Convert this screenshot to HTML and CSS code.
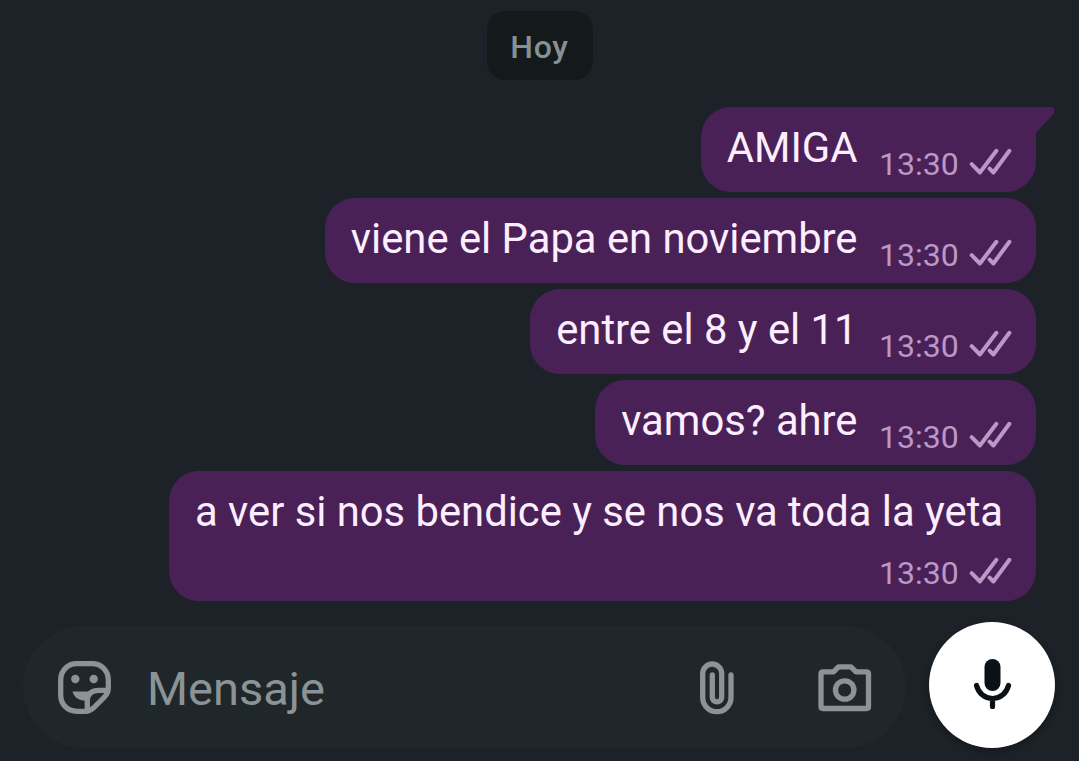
FILE: index.html
```html
<!DOCTYPE html>
<html lang="es">
<head>
    <meta charset="UTF-8">
    <meta name="viewport" content="width=device-width, initial-scale=1.0">
    <title>Chat</title>
    <link rel="stylesheet" href="styles.css">
</head>
<body>
    <svg class="symbols">
        <symbol id="checks" viewBox="0 0 44 28">
            <path d="M2.7 16.2l8.2 8.3L27.4 2.8M20.6 20.6l3.8 3.9L40.4 2.8"/>
        </symbol>
    </svg>

    <div class="chat">
        <div class="date">Hoy</div>

        <div class="messages">
            <div class="message first">
                <span class="text">AMIGA</span>
                <span class="meta"><span class="time">13:30</span><svg class="checks"><use href="#checks"/></svg></span>
                <svg class="tail" viewBox="0 0 24 30"><path d="M0 0H18.5C23.5 0 25 4 22 7.5L5 26V30H0z"/></svg>
            </div>
            <div class="message">
                <span class="text">viene el Papa en noviembre</span>
                <span class="meta"><span class="time">13:30</span><svg class="checks"><use href="#checks"/></svg></span>
            </div>
            <div class="message">
                <span class="text">entre el 8 y el 11</span>
                <span class="meta"><span class="time">13:30</span><svg class="checks"><use href="#checks"/></svg></span>
            </div>
            <div class="message">
                <span class="text">vamos? ahre</span>
                <span class="meta"><span class="time">13:30</span><svg class="checks"><use href="#checks"/></svg></span>
            </div>
            <div class="message long">
                <span class="text">a ver si nos bendice y se nos va toda la yeta</span>
                <span class="meta"><span class="time">13:30</span><svg class="checks"><use href="#checks"/></svg></span>
            </div>
        </div>

        <div class="footer">
            <div class="input-bar">
                <!-- sticker -->
                <svg class="icon sticker" viewBox="0 0 54 54">
                    <path d="M19 2.7H34C43.5 2.7 50.3 9.5 50.3 19V27C50.3 31 49.5 33 46.5 36L36 46.5C33 49.5 31 50.3 27 50.3H19C9.5 50.3 2.7 43.5 2.7 34V19C2.7 9.5 9.5 2.7 19 2.7z"/>
                    <path d="M49.5 29.3H41C33.5 29.3 29.3 33 29.3 40V50"/>
                    <path class="fill" d="M14.5 30.500H36L29.5 40C21 40 16 36.5 14.5 30.5z"/>
                    <circle class="fill" cx="17.3" cy="18" r="4.2"/>
                    <circle class="fill" cx="35.7" cy="18" r="4.2"/>
                </svg>
                <span class="placeholder">Mensaje</span>
                <!-- attach -->
                <svg class="icon clip" viewBox="0 0 36 54">
                    <path d="M31 14V36.5A14.15 14.15 0 0 1 2.7 36.5V12.5A9.5 9.5 0 0 1 21.7 12.5V36.2A4.7 4.7 0 0 1 12.3 36.2V14"/>
                </svg>
                <!-- camera -->
                <svg class="icon camera" viewBox="0 0 54 48">
                    <path d="M5 7.8H15.5L20.5 2.8H33L38 7.8H48.5Q50.5 7.8 50.5 9.8V42.5Q50.5 44.5 48.5 44.5H5Q3 44.5 3 42.5V9.8Q3 7.8 5 7.8z"/>
                    <circle cx="26.7" cy="26" r="9.2"/>
                </svg>
            </div>
            <div class="mic-button">
                <svg class="mic" viewBox="0 0 40 52">
                    <rect class="capsule" x="12.5" y="0" width="16" height="32" rx="8"/>
                    <path d="M4.5 26.5C6.5 34 12.5 39.5 20.5 39.5S34.5 34 36.5 26.5M20.5 39.5V47.5"/>
                </svg>
            </div>
        </div>
    </div>
</body>
</html>
```
FILE: styles.css
```css
* {
    margin: 0;
    padding: 0;
    box-sizing: border-box;
}

body {
    height: 761px;
    overflow: hidden;
    background-color: #1d2229;
    font-family: Roboto, sans-serif;
}

svg {
    display: block;
    fill: none;
    stroke-linecap: round;
    stroke-linejoin: round;
}

.symbols {
    position: absolute;
    width: 0;
    height: 0;
}

.chat {
    display: flex;
    flex-direction: column;
    height: 761px;
    padding-top: 11px;
}

.date {
    align-self: center;
    width: 106px;
    height: 69px;
    border-radius: 18px;
    background-color: #14191c;
    color: #879093;
    font-size: 32px;
    font-weight: 500;
    letter-spacing: 0.7px;
    line-height: 72px;
    text-align: center;
}

.messages {
    display: flex;
    flex-direction: column;
    align-items: flex-end;
    gap: 6px;
    margin-top: 27px;
    padding-right: 43px;
}

.message {
    position: relative;
    display: flex;
    justify-content: space-between;
    gap: 21.5px;
    height: 85px;
    padding: 0 23px 0 26px;
    border-radius: 30px;
    background-color: #4a2157;
}

.message.first {
    border-top-right-radius: 0;
}

.message.long {
    flex-direction: column;
    justify-content: flex-start;
    gap: 0;
    height: 130px;
    padding-right: 33px;
}

.message.long .meta {
    align-self: flex-end;
    margin-right: -10px;
    padding-top: 0;
}

.text {
    color: #fdeeff;
    font-size: 41.75px;
    line-height: 82px;
    white-space: nowrap;
}

.meta {
    display: flex;
    align-items: flex-start;
    padding-top: 37px;
}

.time {
    width: 90px;
    color: #bb98c6;
    font-size: 32px;
    line-height: 40px;
}

.checks {
    width: 44px;
    height: 28px;
    margin-top: 4px;
    stroke: #bb98c6;
    stroke-width: 4;
}

.tail {
    position: absolute;
    top: 0;
    right: -19px;
    width: 24px;
    height: 30px;
    fill: #4a2157;
}

.footer {
    display: flex;
    align-items: flex-end;
    gap: 23px;
    margin-top: 21px;
    padding: 0 24px 0 23px;
}

.input-bar {
    display: flex;
    align-items: center;
    width: 883px;
    height: 122px;
    padding: 2px 34px 0 35px;
    border-radius: 61px;
    background-color: #20272a;
}

.placeholder {
    flex: 1;
    margin-left: 35px;
    padding-top: 2px;
    color: #8b9396;
    font-size: 47px;
    line-height: 56px;
}

.icon {
    stroke: #8b9396;
    stroke-width: 5.3;
}

.icon .fill {
    fill: #8b9396;
    stroke: none;
}

.sticker {
    width: 54px;
    height: 54px;
}

.clip {
    width: 36px;
    height: 54px;
    margin-right: 82px;
}

.camera {
    width: 54px;
    height: 48px;
}

.mic-button {
    display: flex;
    align-items: center;
    justify-content: center;
    width: 126px;
    height: 126px;
    border-radius: 50%;
    background-color: #fff;
    box-shadow: 0 3px 8px rgba(0, 0, 0, 0.3);
}

.mic {
    width: 40px;
    height: 52px;
    stroke: #0b1114;
    stroke-width: 5.2;
}

.mic .capsule {
    fill: #0b1114;
    stroke: none;
}
```
